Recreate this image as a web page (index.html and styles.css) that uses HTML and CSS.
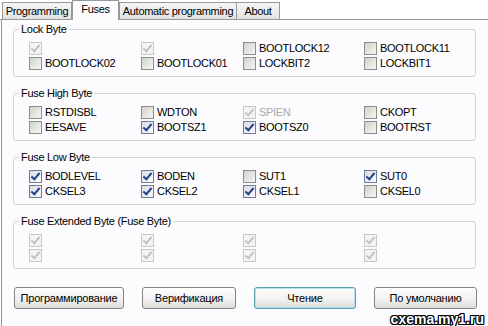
FILE: index.html
```html
<!DOCTYPE html>
<html lang="ru">
<head>
  <meta charset="UTF-8" />
  <title>Fuses</title>
  <link rel="stylesheet" href="styles.css">
</head>
<body>
  <div class="tabs">
    <div class="tab tab-prog">Programming</div>
    <div class="tab tab-fuses active">Fuses</div>
    <div class="tab tab-auto">Automatic programming</div>
    <div class="tab tab-about">About</div>
  </div>

  <div class="page">
    <fieldset class="group">
      <legend>Lock Byte</legend>
      <div class="grid">
        <label class="item"><span class="cb checked disabled"></span></label>
        <label class="item"><span class="cb checked disabled"></span></label>
        <label class="item"><span class="cb"></span>BOOTLOCK12</label>
        <label class="item"><span class="cb"></span>BOOTLOCK11</label>
        <label class="item"><span class="cb"></span>BOOTLOCK02</label>
        <label class="item"><span class="cb"></span>BOOTLOCK01</label>
        <label class="item"><span class="cb"></span>LOCKBIT2</label>
        <label class="item"><span class="cb"></span>LOCKBIT1</label>
      </div>
    </fieldset>

    <fieldset class="group">
      <legend>Fuse High Byte</legend>
      <div class="grid">
        <label class="item"><span class="cb"></span>RSTDISBL</label>
        <label class="item"><span class="cb"></span>WDTON</label>
        <label class="item grey"><span class="cb checked disabled"></span>SPIEN</label>
        <label class="item"><span class="cb"></span>CKOPT</label>
        <label class="item"><span class="cb"></span>EESAVE</label>
        <label class="item"><span class="cb checked"></span>BOOTSZ1</label>
        <label class="item"><span class="cb checked"></span>BOOTSZ0</label>
        <label class="item"><span class="cb"></span>BOOTRST</label>
      </div>
    </fieldset>

    <fieldset class="group">
      <legend>Fuse Low Byte</legend>
      <div class="grid">
        <label class="item"><span class="cb checked"></span>BODLEVEL</label>
        <label class="item"><span class="cb checked"></span>BODEN</label>
        <label class="item"><span class="cb"></span>SUT1</label>
        <label class="item"><span class="cb checked"></span>SUT0</label>
        <label class="item"><span class="cb checked"></span>CKSEL3</label>
        <label class="item"><span class="cb checked"></span>CKSEL2</label>
        <label class="item"><span class="cb checked"></span>CKSEL1</label>
        <label class="item"><span class="cb"></span>CKSEL0</label>
      </div>
    </fieldset>

    <fieldset class="group">
      <legend>Fuse Extended Byte (Fuse Byte)</legend>
      <div class="grid">
        <label class="item"><span class="cb checked disabled"></span></label>
        <label class="item"><span class="cb checked disabled"></span></label>
        <label class="item"><span class="cb checked disabled"></span></label>
        <label class="item"><span class="cb checked disabled"></span></label>
        <label class="item"><span class="cb checked disabled"></span></label>
        <label class="item"><span class="cb checked disabled"></span></label>
        <label class="item"><span class="cb checked disabled"></span></label>
        <label class="item"><span class="cb checked disabled"></span></label>
      </div>
    </fieldset>

    <div class="buttons">
      <button class="btn btn-prog">Программирование</button>
      <button class="btn btn-verify">Верификация</button>
      <button class="btn btn-read focus">Чтение</button>
      <button class="btn btn-default">По умолчанию</button>
    </div>

    <div class="watermark">cxema.my1.ru</div>
  </div>
</body>
</html>
```

FILE: styles.css
```css
body {
  margin: 0;
  width: 488px;
  height: 326px;
  overflow: hidden;
  background: #fff;
  font-family: "Liberation Sans", Arial, sans-serif;
  font-size: 11px;
  letter-spacing: -0.3px;
  color: #000;
}

.tabs {
  display: flex;
  align-items: flex-end;
  height: 19px;
  padding-left: 2px;
  border-bottom: 1px solid #919b9c;
}

.tab {
  box-sizing: border-box;
  height: 17px;
  line-height: 16px;
  text-align: center;
  border: 1px solid #919b9c;
  border-bottom: none;
  background: linear-gradient(#f6f6f6, #e2e2e2);
}

.tab + .tab {
  border-left: none;
}

.tab-prog { width: 70px; }
.tab-fuses { width: 47px; }
.tab-auto { width: 118px; }
.tab-about { width: 43px; }

.tab.active {
  height: 20px;
  line-height: 17px;
  margin-bottom: -1px;
  background: #fcfcfe;
  border-left: 1px solid #919b9c;
}

.tab.active + .tab {
  border-left: 1px solid #919b9c;
}

.page {
  position: relative;
  height: 303px;
  margin-left: 1px;
  padding: 3px 0 0 11px;
  background: #fcfcfe;
  border-left: 1px solid #919b9c;
  border-bottom: 1px solid #919b9c;
}

.group {
  width: 461px;
  margin: 0 0 10px;
  padding: 0;
  border: 1px solid #d4d4cc;
  border-radius: 3px;
}

.group legend {
  margin-left: 5px;
  padding: 0 2px;
  line-height: 12px;
}

.grid {
  display: grid;
  grid-template-columns: 112px 102px 121px 1fr;
  grid-auto-rows: 15px;
  padding: 7px 0 4px 15px;
}

.item {
  display: flex;
  align-items: flex-start;
  line-height: 12px;
}

.item.grey {
  color: #a8a8a8;
}

.cb {
  position: relative;
  box-sizing: border-box;
  width: 13px;
  height: 13px;
  margin-right: 3px;
  border: 1px solid #8c8c8c;
  background: linear-gradient(135deg, #d2d2cc, #f6f6f4);
}

.cb.checked {
  border-color: #6d7d9c;
  background: linear-gradient(135deg, #dadbe2, #fafafc);
}

.cb.checked::after {
  content: '';
  position: absolute;
  left: 3px;
  top: 0px;
  width: 3px;
  height: 7px;
  border: solid #23448c;
  border-width: 0 2px 2px 0;
  transform: rotate(40deg);
}

.cb.disabled {
  border-color: #c8c8c2;
  background: #f4f4f2;
}

.cb.disabled::after {
  border-color: #c2c4c8;
}

.buttons {
  display: flex;
  gap: 18px;
  margin-top: 18px;
  padding-left: 1px;
}

.btn {
  height: 22px;
  padding: 0;
  border: 1px solid #858585;
  border-radius: 3px;
  background: linear-gradient(#ffffff, #f0f0ee 60%, #dcdcd8);
  font-family: inherit;
  font-size: 11px;
  letter-spacing: -0.2px;
  color: #000;
}

.btn-prog { width: 110px; }
.btn-verify { width: 94px; }
.btn-read { width: 102px; }
.btn-default { width: 103px; }

.btn.focus {
  border-color: #5d9fb2;
  box-shadow: inset 0 0 0 1px #b5e0ee;
}

.watermark {
  position: absolute;
  right: 4px;
  bottom: 0;
  line-height: 14px;
  font-size: 14px;
  font-weight: bold;
  letter-spacing: 0;
  color: #fff;
  text-shadow: -1px -1px 0 #000, 1px -1px 0 #000, -1px 1px 0 #000, 1px 1px 0 #000, 0 1px 0 #000, 0 -1px 0 #000, 1px 0 0 #000, -1px 0 0 #000;
}
```
